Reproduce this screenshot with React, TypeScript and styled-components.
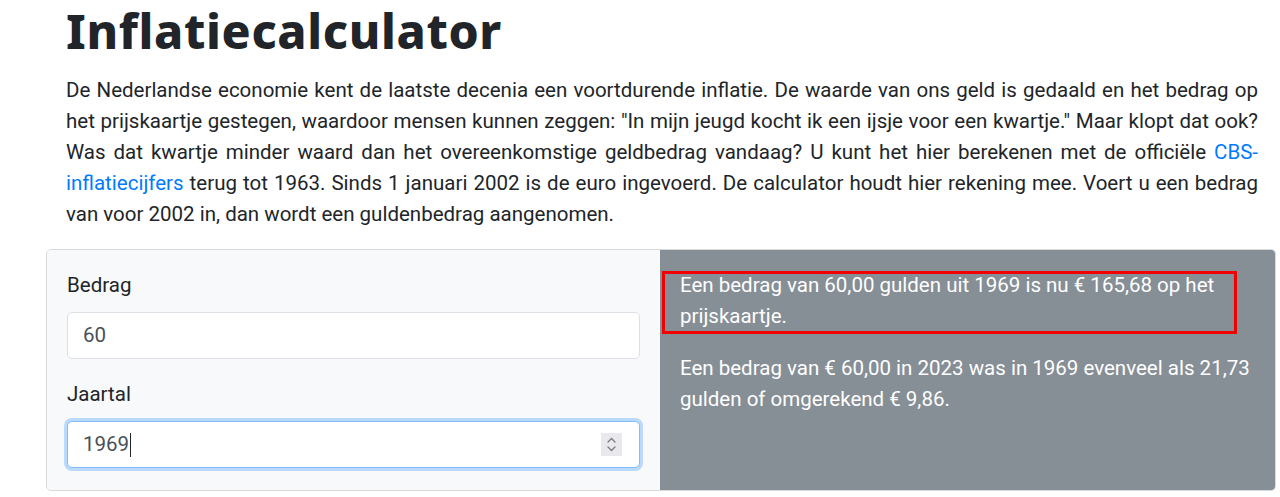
import React from "react";
import styled, { createGlobalStyle } from "styled-components";

const Global = createGlobalStyle`
  html, body { margin: 0; padding: 0; background: #fff; }
  body { font-family: Roboto, "Liberation Sans", sans-serif; color: #212529; }
  * { box-sizing: border-box; }
`;

const Page = styled.main`
  width: 1230px;
  margin-left: 46px;
  padding-top: 2px;
`;

const Intro = styled.section`
  padding: 0 18px 0 20px;
`;

const Title = styled.h1`
  margin: 0 0 15px;
  font-family: "Noto Sans", "DejaVu Sans", sans-serif;
  font-weight: 800;
  font-size: 48px;
  line-height: 57.6px;
  color: #212529;
  letter-spacing: 0.65px;
`;

const Lead = styled.p`
  margin: 0 0 19px;
  font-size: 20.5px;
  line-height: 31px;
  text-align: justify;
`;

const Link = styled.a`
  color: #007bff;
  text-decoration: none;
`;

const Card = styled.div`
  display: grid;
  grid-template-columns: 613px 1fr;
  border: 1px solid rgba(0, 0, 0, 0.15);
  border-radius: 5px;
  overflow: hidden;
`;

const FormPanel = styled.form`
  background: #f8f9fa;
  padding: 20px 20px 22px;
  display: flex;
  flex-direction: column;
  gap: 20px;
`;

const Group = styled.div`
  display: flex;
  flex-direction: column;
`;

const Label = styled.label`
  font-size: 20.5px;
  line-height: 31px;
  margin-bottom: 11px;
  color: #212529;
`;

const Field = styled.div`
  position: relative;
`;

const Input = styled.input<{ $focused?: boolean }>`
  display: block;
  height: 47px;
  width: 100%;
  padding: 0 15px;
  font-family: Roboto, "Liberation Sans", sans-serif;
  font-size: 20.5px;
  color: #495057;
  background: #fff;
  border: 1px solid ${(p) => (p.$focused ? "#80bdff" : "#dde1e5")};
  border-radius: 5px;
  outline: none;
  box-shadow: ${(p) => (p.$focused ? "0 0 0 3px rgba(0, 123, 255, 0.25)" : "none")};
  caret-color: transparent;
  -moz-appearance: textfield;
  &::-webkit-inner-spin-button,
  &::-webkit-outer-spin-button {
    -webkit-appearance: none;
    margin: 0;
  }
`;

const Caret = styled.span<{ $left: number }>`
  position: absolute;
  left: ${(p) => p.$left}px;
  top: 12px;
  width: 1px;
  height: 24px;
  background: #212529;
  pointer-events: none;
`;

const Spinner = styled.span`
  position: absolute;
  right: 18px;
  top: 12px;
  width: 21px;
  height: 23px;
  background: #e9e9ed;
  display: flex;
  align-items: center;
  justify-content: center;
  pointer-events: none;
`;

const ResultPanel = styled.div`
  position: relative;
  background: #868e96;
  color: #fff;
  padding: 20px;
`;

const Result = styled.p`
  margin: 0 0 21px;
  font-size: 20.5px;
  line-height: 31px;
`;

const Highlight = styled.div`
  position: absolute;
  left: 2px;
  top: 21px;
  width: 575px;
  height: 63px;
  border: 3px solid #f00000;
  pointer-events: none;
`;

export default function App() {
  return (
    <>
      <Global />
      <Page>
        <Intro>
          <Title>Inflatiecalculator</Title>
          <Lead>
            De Nederlandse economie kent de laatste decenia een voortdurende inflatie. De waarde van ons geld is
            gedaald en het bedrag op het prijskaartje gestegen, waardoor mensen kunnen zeggen: "In mijn jeugd kocht
            ik een ijsje voor een kwartje." Maar klopt dat ook? Was dat kwartje minder waard dan het overeenkomstige
            geldbedrag vandaag? U kunt het hier berekenen met de officiële{" "}
            <Link href="#">CBS-inflatiecijfers</Link> terug tot 1963. Sinds 1 januari 2002 is de euro ingevoerd. De
            calculator houdt hier rekening mee. Voert u een bedrag van voor 2002 in, dan wordt een guldenbedrag
            aangenomen.
          </Lead>
        </Intro>
        <Card>
          <FormPanel onSubmit={(e) => e.preventDefault()}>
            <Group>
              <Label htmlFor="bedrag">Bedrag</Label>
              <Field>
                <Input id="bedrag" type="text" defaultValue="60" />
              </Field>
            </Group>
            <Group>
              <Label htmlFor="jaartal">Jaartal</Label>
              <Field>
                <Input id="jaartal" type="number" defaultValue="1969" $focused />
                <Caret $left={63} />
                <Spinner>
                  <svg width="11" height="17" viewBox="0 0 11 17" fill="none" stroke="#7a7a80" strokeWidth="1.3" strokeLinecap="round" strokeLinejoin="round">
                    <polyline points="2,6 5.5,2.5 9,6" />
                    <polyline points="2,11 5.5,14.5 9,11" />
                  </svg>
                </Spinner>
              </Field>
            </Group>
          </FormPanel>
          <ResultPanel>
            <Result>Een bedrag van 60,00 gulden uit 1969 is nu € 165,68 op het prijskaartje.</Result>
            <Result>
              Een bedrag van € 60,00 in 2023 was in 1969 evenveel als 21,73 gulden of omgerekend € 9,86.
            </Result>
            <Highlight />
          </ResultPanel>
        </Card>
      </Page>
    </>
  );
}
